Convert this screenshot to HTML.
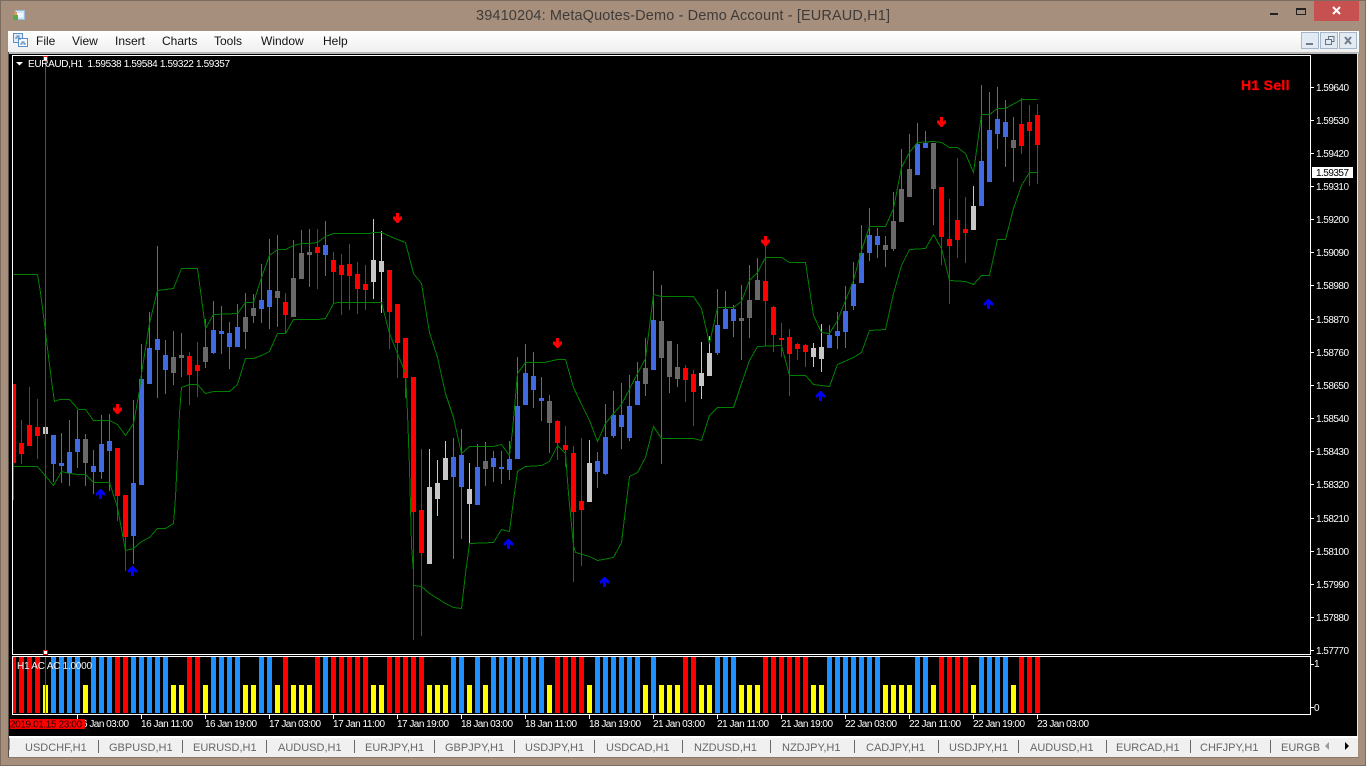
<!DOCTYPE html>
<html lang="en"><head><meta charset="utf-8"><title>MetaQuotes-Demo</title>
<style>
html,body{margin:0;padding:0;background:#A68F7D;width:1366px;height:766px;overflow:hidden}
svg{position:absolute;left:0;top:0;font-family:"Liberation Sans",sans-serif}
.w{stroke-width:1;fill:none}.b{stroke-width:5;fill:none}
.p text,.t text{font-size:10px;fill:#fff}
.m text{font-size:12px;fill:#111}
.tb text{font-size:11px;fill:#666}
</style></head><body>
<svg width="1366" height="766" viewBox="0 0 1366 766" xmlns="http://www.w3.org/2000/svg">
<defs>
<clipPath id="cl"><rect x="13" y="56" width="1297" height="658"/></clipPath>
<clipPath id="tc"><rect x="1270" y="738" width="51" height="19"/></clipPath>
<linearGradient id="mb" x1="0" y1="0" x2="0" y2="1"><stop offset="0" stop-color="#fff"/><stop offset="1" stop-color="#efefef"/></linearGradient>
<path id="ad" d="M-1 0H2V5L4 3 5 4V6L2 9 1.5 10H-.5L-1 9-4 6V4L-3 3-1 5Z"/>
<path id="au" d="M-1 10H2V5L4 7 5 6V4L2 1 1.5 0H-.5L-1 1-4 4V6L-3 7-1 5Z"/>
</defs>
<!-- window frame -->
<rect width="1366" height="766" fill="#A68F7D"/>
<path d="M.5 .5H1365.5V765.5H.5Z" fill="none" stroke="#7c6c5f"/>
<g shape-rendering="crispEdges">
<rect x="15.5" y="10.5" width="9" height="9" fill="#d6e6f6" stroke="#9dbbdc"/>
<rect x="17" y="13" width="6" height="4" fill="#f4f8fc"/>
<rect x="14" y="12" width="3" height="3" fill="#d89a62"/>
<rect x="13" y="15" width="5" height="5" fill="#5aa848"/>
</g>
<text x="476" y="20" font-size="14.5" fill="#3f3b38" textLength="414">39410204: MetaQuotes-Demo - Demo Account - [EURAUD,H1]</text>
<rect x="1270" y="13" width="8" height="2" fill="#222"/>
<rect x="1296.5" y="8.5" width="9" height="6" fill="none" stroke="#222" stroke-width="1" shape-rendering="crispEdges"/><rect x="1296" y="8" width="10" height="2" fill="#222"/>
<rect x="1314" y="1" width="45" height="20" fill="#C75050"/>
<path d="M1333 7L1340 14M1340 7L1333 14" stroke="#fff" stroke-width="2" fill="none"/>

<!-- menu bar -->
<rect x="8" y="31" width="1351" height="21" fill="url(#mb)"/>
<g transform="translate(13,33)" fill="none" stroke="#5b8fc8" stroke-width="1" shape-rendering="crispEdges">
<rect x=".5" y=".5" width="9" height="9" fill="#e4eef9"/><rect x="5.5" y="5.5" width="9" height="8" fill="#f6fafe"/>
<path d="M2 5h2v-2h2v3h2M7 11h2v-2h2v2h2" stroke="#4a7fb8"/>
</g>
<g class="m">
<text x="36" y="45">File</text><text x="72" y="45">View</text><text x="115" y="45">Insert</text><text x="162" y="45">Charts</text><text x="214" y="45">Tools</text><text x="261" y="45">Window</text><text x="323" y="45">Help</text>
</g>
<g shape-rendering="crispEdges">
<rect x="1301.5" y="32.5" width="17" height="16" fill="#e2eaf4" stroke="#a5b6c9"/>
<rect x="1320.5" y="32.5" width="17" height="16" fill="#e2eaf4" stroke="#a5b6c9"/>
<rect x="1339.5" y="32.5" width="17" height="16" fill="#e2eaf4" stroke="#a5b6c9"/>
<rect x="1306" y="43" width="7" height="2" fill="#6f7c8a"/>
<path d="M1325.5 39.5h6v5h-6zM1328.5 39v-2.5h5.5v5h-2" fill="none" stroke="#66727f"/>
</g>
<path d="M1345 37L1351 44M1351 37L1345 44" stroke="#6f7c8a" stroke-width="2" fill="none"/>

<!-- client -->
<rect x="8" y="52" width="1351" height="2" fill="#b8b8b8"/>
<rect x="9" y="54" width="1348" height="682" fill="#000"/>
<rect x="1357" y="53" width="1" height="685" fill="#e8e8e8"/>
<rect x="8" y="52" width="1" height="706" fill="#57504a"/>
<rect x="9" y="736" width="1349" height="2" fill="#fff"/>

<!-- tabs -->
<rect x="9" y="738" width="1349" height="19" fill="#F0F0F0"/>
<rect x="8" y="757" width="1351" height="1" fill="#8a7768"/>
<g class="tb">
<text x="25" y="751">USDCHF,H1</text><text x="109" y="751">GBPUSD,H1</text><text x="193" y="751">EURUSD,H1</text><text x="278" y="751">AUDUSD,H1</text><text x="365" y="751">EURJPY,H1</text><text x="445" y="751">GBPJPY,H1</text><text x="525" y="751">USDJPY,H1</text><text x="606" y="751">USDCAD,H1</text><text x="694" y="751">NZDUSD,H1</text><text x="782" y="751">NZDJPY,H1</text><text x="866" y="751">CADJPY,H1</text><text x="949" y="751">USDJPY,H1</text><text x="1030" y="751">AUDUSD,H1</text><text x="1116" y="751">EURCAD,H1</text><text x="1200" y="751">CHFJPY,H1</text><text x="1281" y="751" clip-path="url(#tc)">EURGBP,H1</text>
</g>
<path d="M98.5 740v13M182.5 740v13M266.5 740v13M354.5 740v13M434.5 740v13M514.5 740v13M594.5 740v13M682.5 740v13M770.5 740v13M854.5 740v13M938.5 740v13M1018.5 740v13M1106.5 740v13M1190.5 740v13M1270.5 740v13" stroke="#6a6a6a" fill="none" shape-rendering="crispEdges"/>
<path d="M1329 742v8l-4-4z" fill="#9a9a9a"/><path d="M1345 742v8l4-4z" fill="#000"/>
<rect x="9" y="738" width="1" height="12" fill="#9a9a9a"/>

<!-- chart boxes -->
<g shape-rendering="crispEdges" fill="none" stroke="#fff">
<rect x="12.5" y="55.5" width="1298" height="599"/>
<rect x="12.5" y="656.5" width="1298" height="58"/>
<path d="M1311 87.5h3M1311 120.5h3M1311 153.5h3M1311 186.5h3M1311 219.5h3M1311 252.5h3M1311 285.5h3M1311 319.5h3M1311 352.5h3M1311 385.5h3M1311 418.5h3M1311 451.5h3M1311 484.5h3M1311 518.5h3M1311 551.5h3M1311 584.5h3M1311 617.5h3M1311 650.5h3M1311 664.5h3M1311 707.5h3"/>
<path d="M77.5 715v4M141.5 715v4M205.5 715v4M269.5 715v4M333.5 715v4M397.5 715v4M461.5 715v4M525.5 715v4M589.5 715v4M653.5 715v4M717.5 715v4M781.5 715v4M845.5 715v4M909.5 715v4M973.5 715v4M1037.5 715v4"/>
</g>

<g clip-path="url(#cl)">
<!-- histogram -->
<g transform="translate(.5,0)" shape-rendering="crispEdges">
<path class="b" stroke="#f00" d="M13 657v56M21 657v56M29 657v56M37 657v56M117 657v56M125 657v56M189 657v56M197 657v56M285 657v56M317 657v56M333 657v56M341 657v56M349 657v56M357 657v56M365 657v56M389 657v56M397 657v56M405 657v56M413 657v56M421 657v56M557 657v56M565 657v56M573 657v56M581 657v56M685 657v56M693 657v56M765 657v56M773 657v56M781 657v56M789 657v56M797 657v56M805 657v56M941 657v56M949 657v56M957 657v56M965 657v56M1021 657v56M1029 657v56M1037 657v56"/>
<path class="b" stroke="#1E90FF" d="M53 657v56M61 657v56M69 657v56M77 657v56M93 657v56M101 657v56M109 657v56M133 657v56M141 657v56M149 657v56M157 657v56M165 657v56M213 657v56M221 657v56M229 657v56M237 657v56M261 657v56M269 657v56M325 657v56M453 657v56M461 657v56M477 657v56M493 657v56M501 657v56M509 657v56M517 657v56M525 657v56M533 657v56M541 657v56M597 657v56M605 657v56M613 657v56M621 657v56M629 657v56M637 657v56M653 657v56M717 657v56M725 657v56M733 657v56M829 657v56M837 657v56M845 657v56M853 657v56M861 657v56M869 657v56M877 657v56M917 657v56M925 657v56M981 657v56M989 657v56M997 657v56M1005 657v56"/>
<path class="b" stroke="#FF0" d="M45 685v28M85 685v28M173 685v28M181 685v28M205 685v28M245 685v28M253 685v28M277 685v28M293 685v28M301 685v28M309 685v28M373 685v28M381 685v28M429 685v28M437 685v28M445 685v28M469 685v28M485 685v28M549 685v28M589 685v28M645 685v28M661 685v28M669 685v28M677 685v28M701 685v28M709 685v28M741 685v28M749 685v28M757 685v28M813 685v28M821 685v28M885 685v28M893 685v28M901 685v28M909 685v28M933 685v28M973 685v28M1013 685v28"/>
</g>
<!-- candles -->
<g transform="translate(.5,0)" shape-rendering="crispEdges">
<path class="w" stroke="#f00" d="M13 384V500M21 420V464M29 387V446M37 399V459M117 448V521M125 495V571M189 352V405M197 342V397M285 293V333M317 229V289M333 252V304M341 254V315M349 244V310M357 262V314M365 265V310M389 270V349M397 304V378M405 338V398M413 377V640M421 449V636M557 420V460M565 426V467M573 446V582M581 438V566M685 365V402M693 370V426M765 245V346M773 306V352M781 323V357M789 329V396M797 343V360M805 344V367M941 187V265M949 199V304M957 158V258M965 197V263M1021 98V154M1029 105V186M1037 104V184"/>
<path class="b" stroke="#f00" d="M13 384V463M21 443V454M29 425V446M37 427V436M117 448V496M125 495V537M189 356V375M197 365V371M285 302V315M317 247V253M333 260V272M341 265V275M349 264V276M357 274V289M365 284V290M389 270V312M397 304V343M405 338V378M413 377V512M421 510V553M557 421V443M565 445V450M573 453V512M581 501V510M685 368V380M693 374V392M765 281V301M773 307V335M781 338V340M789 337V354M797 344V349M805 345V352M941 187V237M949 239V246M957 220V240M965 229V233M1021 124V146M1029 122V131M1037 115V145"/>
<path class="w" stroke="#4169E1" d="M53 435V482M61 433V483M69 420V486M77 410V468M93 450V494M101 415V479M109 414V491M133 400V564M141 344V485M149 312V384M157 246V398M165 340V394M213 301V354M221 306V354M229 322V369M237 304V347M261 264V323M269 239V329M325 221V276M453 438V559M461 429V539M477 444V505M493 451V482M501 451V484M509 441V480M517 357V459M525 344V405M533 352V408M541 377V421M597 452V488M605 404V475M613 391V438M621 383V449M629 375V441M637 362V405M653 271V370M717 289V355M725 291V329M733 305V337M829 325V348M837 312V349M845 286V348M853 262V310M861 225V283M869 208V261M877 228V258M917 123V175M925 131V148M981 85V206M989 92V182M997 87V149M1005 100V167"/>
<path class="b" stroke="#4169E1" d="M53 435V464M61 463V466M69 452V473M77 439V452M93 466V472M101 444V472M109 441V451M133 483V536M141 379V485M149 348V384M157 339V350M165 355V370M213 330V353M221 331V334M229 333V347M237 327V347M261 300V309M269 290V307M325 245V255M453 457V477M461 455V487M477 467V505M493 458V467M501 467V469M509 459V470M517 406V459M525 373V405M533 376V390M541 398V401M597 461V472M605 437V474M613 415V436M621 415V427M629 406V438M637 381V405M653 320V370M717 325V353M725 309V329M733 309V321M829 335V348M837 331V336M845 311V332M853 284V306M861 253V283M869 235V253M877 236V245M917 144V175M925 143V148M981 161V206M989 130V182M997 119V134M1005 122V137"/>
<path class="w" stroke="#696969" d="M85 434V486M173 331V385M181 333V377M205 319V368M245 293V349M253 294V323M277 235V327M293 240V317M301 230V279M309 229V287M485 442V486M549 395V453M645 338V396M661 285V464M669 341V393M677 344V387M741 285V360M749 265V338M757 258V300M885 236V267M893 192V251M901 149V222M909 134V197M933 143V225M1013 117V182"/>
<path class="b" stroke="#696969" d="M85 439V463M173 357V373M181 355V358M205 347V362M245 317V332M253 308V316M277 291V298M293 278V317M301 253V279M309 252V255M485 461V469M549 401V423M645 368V384M661 321V358M669 341V377M677 367V379M741 318V321M749 300V318M757 280V300M885 245V250M893 221V249M901 189V222M909 169V197M933 143V189M1013 140V148"/>
<path class="w" stroke="#C8C8C8" d="M373 219V299M381 231V313M429 449V564M437 460V516M445 441V480M469 463V544M589 440V502M701 342V399M709 336V376M813 343V367M821 324V372M973 186V230"/>
<path class="b" stroke="#C8C8C8" d="M45 427V434M373 260V282M381 261V272M429 487V564M437 483V499M445 458V480M469 489V504M589 463V502M701 373V386M709 353V376M813 348V357M821 347V359M973 206V230"/>
</g>
<!-- bands -->
<g transform="translate(.5,.5)" fill="none" stroke="#008000" stroke-width="1" shape-rendering="crispEdges">
<polyline points="13,274 37,274 40,292 45,331 46,340 51,380 54,401 59,399 69,399 78,409 85,409 93,420 109,420 117,424 125,435 133,423 139,390 141,373 149,323 157,290 173,288 181,268 197,268 205,328 213,314 237,313 245,302 253,302 261,277 269,255 277,249 285,249 293,245 301,243 309,243 317,242 325,236 333,233 369,233 373,232 381,232 397,239 405,242 413,273 421,283 429,332 437,357 445,393 453,417 461,453 469,446 493,446 501,444 509,455 512,430 517,373 525,362 544,362 557,359 565,359 573,387 581,404 589,420 597,441 605,423 613,413 621,404 637,373 645,358 653,294 661,296 693,296 701,308 709,343 717,307 733,307 741,301 749,280 757,272 765,257 781,257 789,262 805,262 813,315 821,332 829,333 837,320 853,280 861,250 869,226 885,226 893,208 901,167 909,152 917,142 933,141 941,142 949,147 957,147 965,153 973,172 981,114 989,114 997,108 1005,108 1021,99 1037,99"/>
<polyline points="13,466 37,466 53,485 61,471 69,473 77,474 85,474 93,482 109,482 117,507 125,550 133,548 141,541 149,537 157,528 165,528 173,523 175,497 179,413 181,387 189,384 197,384 205,393 213,391 229,391 237,384 245,358 253,358 261,355 269,351 277,333 285,333 293,319 317,319 325,318 333,303 337,302 381,302 389,333 397,353 405,373 407,413 408,440 409,467 411,545 413,572"/>
<polyline points="413,585 421,586 429,593 437,598 445,603 453,607 461,608 465,573 469,543 493,542 501,529 509,531 513,500 517,471 525,466 541,465 549,461 557,445 565,453 568,493 573,545 575,552 589,556 597,560 613,557 621,542 629,476 637,472 645,457 653,426 661,438 693,438 701,440 709,415 717,407 733,407 741,383 749,360 757,346 781,345 789,375 805,375 813,384 829,386 837,364 853,357 861,352 869,330 885,329 893,293 901,265 909,249 925,248 933,234 941,248 949,280 965,281 973,284 981,275 989,275 997,239 1005,239 1013,208 1021,185 1029,172 1037,172"/>
</g>
</g>
<!-- arrows -->
<g fill="#f00">
<use href="#ad" x="117" y="404"/><use href="#ad" x="397" y="213"/><use href="#ad" x="557" y="338"/><use href="#ad" x="765" y="236"/><use href="#ad" x="941" y="117"/>
</g>
<g fill="#00f">
<use href="#au" x="100" y="489"/><use href="#au" x="132" y="566"/><use href="#au" x="508" y="539"/><use href="#au" x="604" y="577"/><use href="#au" x="820" y="391"/><use href="#au" x="988" y="299"/>
</g>
<!-- crosshair -->
<g shape-rendering="crispEdges">
<rect x="45" y="56" width="1" height="598" fill="#e81010"/>
<rect x="45" y="657" width="1" height="57" fill="#e81010"/>
<rect x="43.5" y="56.5" width="4" height="4" fill="#fff" stroke="#f00"/>
<rect x="43.5" y="650.5" width="4" height="4" fill="#fff" stroke="#f00"/>
</g>
<!-- legends -->
<path d="M16 62h7l-3.5 3.5z" fill="#fff"/>
<text x="28" y="67" font-size="10" fill="#fff" textLength="202" xml:space="preserve">EURAUD,H1  1.59538 1.59584 1.59322 1.59357</text>
<text x="17" y="669" font-size="10" fill="#f4f4f4" textLength="75">H1 AC AC 1.0000</text>
<text x="1241" y="90" font-size="14" font-weight="700" fill="#f00" stroke="#f00" stroke-width=".35" letter-spacing=".3">H1 Sell</text>
<!-- price axis -->
<g class="p">
<text x="1316" y="91" textLength="33">1.59640</text><text x="1316" y="124" textLength="33">1.59530</text><text x="1316" y="157" textLength="33">1.59420</text><text x="1316" y="190" textLength="33">1.59310</text><text x="1316" y="223" textLength="33">1.59200</text><text x="1316" y="256" textLength="33">1.59090</text><text x="1316" y="289" textLength="33">1.58980</text><text x="1316" y="323" textLength="33">1.58870</text><text x="1316" y="356" textLength="33">1.58760</text><text x="1316" y="389" textLength="33">1.58650</text><text x="1316" y="422" textLength="33">1.58540</text><text x="1316" y="455" textLength="33">1.58430</text><text x="1316" y="488" textLength="33">1.58320</text><text x="1316" y="522" textLength="33">1.58210</text><text x="1316" y="555" textLength="33">1.58100</text><text x="1316" y="588" textLength="33">1.57990</text><text x="1316" y="621" textLength="33">1.57880</text><text x="1316" y="654" textLength="33">1.57770</text>
<text x="1314" y="667">1</text><text x="1314" y="711">0</text>
</g>
<rect x="1312" y="167" width="41" height="11" fill="#fff"/>
<text x="1316" y="176" font-size="10" fill="#000" textLength="33">1.59357</text>
<!-- time axis -->
<g class="t">
<text x="77" y="727" textLength="52">16 Jan 03:00</text><text x="141" y="727" textLength="52">16 Jan 11:00</text><text x="205" y="727" textLength="52">16 Jan 19:00</text><text x="269" y="727" textLength="52">17 Jan 03:00</text><text x="333" y="727" textLength="52">17 Jan 11:00</text><text x="397" y="727" textLength="52">17 Jan 19:00</text><text x="461" y="727" textLength="52">18 Jan 03:00</text><text x="525" y="727" textLength="52">18 Jan 11:00</text><text x="589" y="727" textLength="52">18 Jan 19:00</text><text x="653" y="727" textLength="52">21 Jan 03:00</text><text x="717" y="727" textLength="52">21 Jan 11:00</text><text x="781" y="727" textLength="52">21 Jan 19:00</text><text x="845" y="727" textLength="52">22 Jan 03:00</text><text x="909" y="727" textLength="52">22 Jan 11:00</text><text x="973" y="727" textLength="52">22 Jan 19:00</text><text x="1037" y="727" textLength="52">23 Jan 03:00</text>
</g>
<rect x="10" y="719" width="75" height="10" fill="#f00" shape-rendering="crispEdges"/>
<text x="10" y="727.5" font-size="10" fill="#200" textLength="72">2019.01.15 23:00</text>
</svg>
</body></html>
